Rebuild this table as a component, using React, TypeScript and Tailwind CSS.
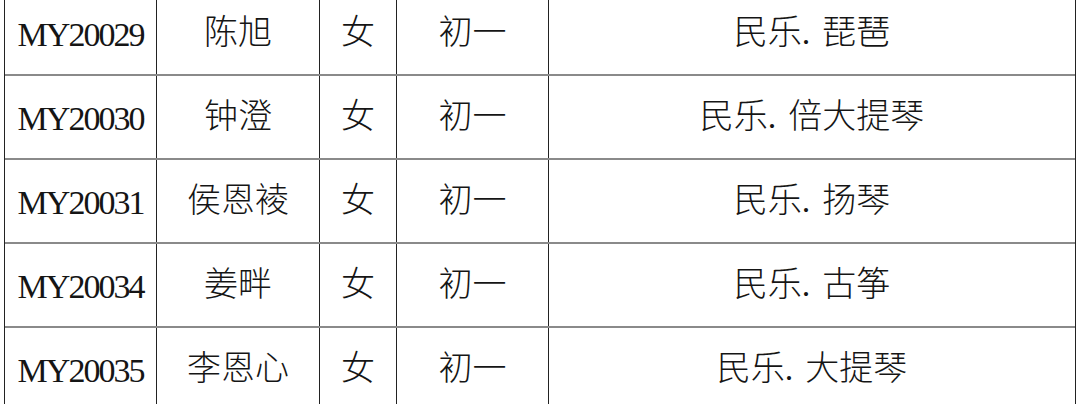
const rows = [
  { id: "MY20029", name: "陈旭", sex: "女", grade: "初一", item: "民乐. 琵琶" },
  { id: "MY20030", name: "钟澄", sex: "女", grade: "初一", item: "民乐. 倍大提琴" },
  { id: "MY20031", name: "侯恩裬", sex: "女", grade: "初一", item: "民乐. 扬琴" },
  { id: "MY20034", name: "姜畔", sex: "女", grade: "初一", item: "民乐. 古筝" },
  { id: "MY20035", name: "李恩心", sex: "女", grade: "初一", item: "民乐. 大提琴" },
]

const cell = "flex items-center justify-center border-r border-[#222]"

export default function App() {
  return (
    <div
      className="w-[1080px] h-[404px] overflow-hidden bg-white text-[#151515]"
      style={{ fontFamily: '"Liberation Serif", "Noto Sans CJK SC", serif' }}
    >
      <div className="ml-[4px] -mt-[8px] w-[1072px] border-x border-[#222]">
        {rows.map((r) => (
          <div
            key={r.id}
            className="grid h-[84px] grid-cols-[152px_163px_77px_152px_1fr] border-b-2 border-[#8a8a8a] text-[34px] leading-none"
          >
            <div className={`${cell} tracking-[-2px] pt-[3px]`}>{r.id}</div>
            <div className={`${cell} font-light`}>{r.name}</div>
            <div className={`${cell} font-light`}>{r.sex}</div>
            <div className={`${cell} font-light`}>{r.grade}</div>
            <div className="flex items-center justify-center font-light">
              <span>{r.item.split(" ")[0]}</span>
              <span className="w-[12px]" />
              <span>{r.item.split(" ")[1]}</span>
            </div>
          </div>
        ))}
      </div>
    </div>
  )
}
